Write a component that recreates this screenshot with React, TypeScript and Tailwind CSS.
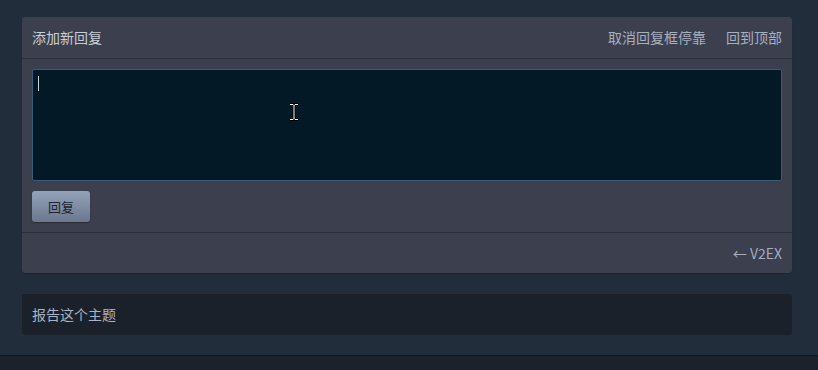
export default function App() {
  return (
    <div
      className="min-h-[370px] bg-[#222d3b] text-[14px] text-[#c3c8d2]"
      style={{ fontFamily: '"Noto Sans CJK SC", "Noto Sans", sans-serif' }}
    >
      <div className="pl-[22px] pr-[26px] pt-[17px]">
        <div className="rounded-[3px] bg-[#3b3f4e] shadow-[0_1px_1px_rgba(0,0,0,0.2)]">
          <div className="flex h-[42px] items-center justify-between border-b border-[#2b2f3a] px-[10px]">
            <span className="text-[#c9cdd6]">添加新回复</span>
            <div className="flex gap-[20px] text-[#a8b0c0]">
              <span>取消回复框停靠</span>
              <span>回到顶部</span>
            </div>
          </div>
          <div className="px-[10px] pt-[10px] pb-[10px]">
            <div className="relative h-[112px] rounded-[2px] border border-[#3d5a74] bg-[#031a26]">
              <div className="absolute left-[5px] top-[6px] h-[15px] w-px bg-[#c8d0dc]" />
              <svg
                className="absolute left-[255px] top-[33px]"
                width="12"
                height="18"
                viewBox="0 0 12 18"
              >
                <path
                  d="M2 1.5h3l1 1 1-1h3M2 16.5h3l1-1 1 1h3M6 2.5v13"
                  stroke="#000"
                  strokeWidth="3"
                  fill="none"
                />
                <path
                  d="M2 1.5h3l1 1 1-1h3M2 16.5h3l1-1 1 1h3M6 2.5v13"
                  stroke="#fff"
                  strokeWidth="1"
                  fill="none"
                />
              </svg>
            </div>
            <button className="mt-[10px] h-[31px] w-[58px] rounded-[3px] bg-gradient-to-b from-[#93a2bb] to-[#6c778d] text-[13px] text-[#1f2430] shadow-[0_1px_1px_rgba(0,0,0,0.3)]">
              回复
            </button>
          </div>
          <div className="flex h-[41px] items-center justify-end border-t border-[#2b2f3a] px-[10px] text-[#a3adbf]">
            ← V2EX
          </div>
        </div>
        <div className="mt-[21px] flex h-[41px] items-center rounded-[3px] bg-[#1a212b] px-[10px] text-[#aab4c4]">
          报告这个主题
        </div>
      </div>
      <div className="mt-[20px] h-[15px] border-t border-[#121820] bg-[#1b222b]" />
    </div>
  );
}
